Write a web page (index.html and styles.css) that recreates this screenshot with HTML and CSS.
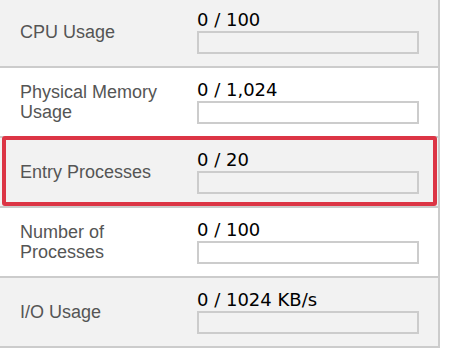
FILE: index.html
```html
<!DOCTYPE html>
<html lang="en">
<head>
  <meta charset="UTF-8" />
  <title>Resource Usage</title>
  <link rel="stylesheet" href="styles.css">
</head>
<body>
  <div class="limits">
    <div class="row odd">
      <div class="label">CPU Usage</div>
      <div class="value">
        <div class="amount">0 / 100</div>
        <div class="bar"></div>
      </div>
    </div>
    <div class="row">
      <div class="label">Physical Memory Usage</div>
      <div class="value">
        <div class="amount">0 / 1,024</div>
        <div class="bar"></div>
      </div>
    </div>
    <div class="row odd highlight">
      <div class="label">Entry Processes</div>
      <div class="value">
        <div class="amount">0 / 20</div>
        <div class="bar"></div>
      </div>
    </div>
    <div class="row">
      <div class="label">Number of Processes</div>
      <div class="value">
        <div class="amount">0 / 100</div>
        <div class="bar"></div>
      </div>
    </div>
    <div class="row odd">
      <div class="label">I/O Usage</div>
      <div class="value">
        <div class="amount">0 / 1024 KB/s</div>
        <div class="bar"></div>
      </div>
    </div>
  </div>
</body>
</html>
```

FILE: styles.css
```css
body {
  margin: 0;
  background: white;
}
.limits {
  width: 438px;
  margin-top: -2px;
  border-right: 2px solid #ccc;
}
.row {
  position: relative;
  display: flex;
  align-items: center;
  height: 68px;
  border-bottom: 2px solid #ccc;
  background: white;
}
.row.odd {
  background: #f2f2f2;
}
.highlight::after {
  content: "";
  position: absolute;
  top: -2px;
  left: 2px;
  right: 1px;
  bottom: 0;
  border: 4px solid #dc3545;
  border-radius: 3px;
}
.label {
  width: 197px;
  box-sizing: border-box;
  padding: 0 20px;
  font-family: "Liberation Sans", Arial, sans-serif;
  font-size: 18px;
  line-height: 20px;
  color: #555;
}
.value {
  padding-bottom: 1px;
}
.amount {
  font-family: "DejaVu Sans", Verdana, sans-serif;
  font-size: 18px;
  line-height: 20px;
  color: #000;
}
.bar {
  width: 222px;
  height: 23px;
  box-sizing: border-box;
  margin-top: 1px;
  border: 2px solid #ccc;
}
```
